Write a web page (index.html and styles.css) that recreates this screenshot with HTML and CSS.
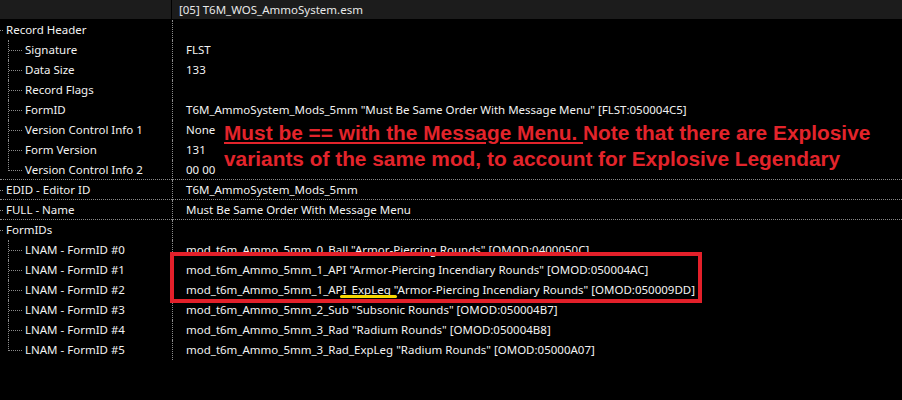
FILE: index.html
```html
<!DOCTYPE html>
<html lang="en">
<head>
    <meta charset="UTF-8">
    <title>T6M_WOS_AmmoSystem.esm</title>
    <link rel="stylesheet" href="styles.css">
</head>
<body>
    <div class="header">
        <div class="hdr-name"></div>
        <div class="hdr-file">[05] T6M_WOS_AmmoSystem.esm</div>
    </div>
    <div class="tree">
        <div class="row"><div class="name top">Record Header</div><div class="val"></div></div>
        <div class="row"><div class="name child">Signature</div><div class="val">FLST</div></div>
        <div class="row"><div class="name child">Data Size</div><div class="val">133</div></div>
        <div class="row"><div class="name child">Record Flags</div><div class="val"></div></div>
        <div class="row"><div class="name child">FormID</div><div class="val">T6M_AmmoSystem_Mods_5mm "Must Be Same Order With Message Menu" [FLST:050004C5]</div></div>
        <div class="row"><div class="name child">Version Control Info 1</div><div class="val">None</div></div>
        <div class="row"><div class="name child">Form Version</div><div class="val">131</div></div>
        <div class="row sep"><div class="name child last">Version Control Info 2</div><div class="val">00 00</div></div>
        <div class="row sep"><div class="name top">EDID - Editor ID</div><div class="val">T6M_AmmoSystem_Mods_5mm</div></div>
        <div class="row sep"><div class="name top">FULL - Name</div><div class="val">Must Be Same Order With Message Menu</div></div>
        <div class="row"><div class="name top">FormIDs</div><div class="val"></div></div>
        <div class="row"><div class="name child">LNAM - FormID #0</div><div class="val">mod_t6m_Ammo_5mm_0_Ball "Armor-Piercing Rounds" [OMOD:0400050C]</div></div>
        <div class="row"><div class="name child">LNAM - FormID #1</div><div class="val">mod_t6m_Ammo_5mm_1_API "Armor-Piercing Incendiary Rounds" [OMOD:050004AC]</div></div>
        <div class="row"><div class="name child">LNAM - FormID #2</div><div class="val">mod_t6m_Ammo_5mm_1_API<span class="mark">_ExpLeg</span> "Armor-Piercing Incendiary Rounds" [OMOD:050009DD]</div></div>
        <div class="row"><div class="name child">LNAM - FormID #3</div><div class="val">mod_t6m_Ammo_5mm_2_Sub "Subsonic Rounds" [OMOD:050004B7]</div></div>
        <div class="row"><div class="name child">LNAM - FormID #4</div><div class="val">mod_t6m_Ammo_5mm_3_Rad "Radium Rounds" [OMOD:050004B8]</div></div>
        <div class="row"><div class="name child last">LNAM - FormID #5</div><div class="val">mod_t6m_Ammo_5mm_3_Rad_ExpLeg "Radium Rounds" [OMOD:05000A07]</div></div>
    </div>

    <div class="note">
        <u>Must be == with the Message Menu. </u>Note that there are Explosive<br>
        variants of the same mod, to account for Explosive Legendary
    </div>
    <div class="redbox"></div>
</body>
</html>
```

FILE: styles.css
```css
html,body{
    margin:0;
    padding:0;
    background:#000;
    color:#f2f2f2;
    font-family:"Noto Sans",sans-serif;
    font-size:11.5px;
    position:relative;
    height:400px;
    overflow:hidden;
}
.header{
    display:grid;
    grid-template-columns:172px 1fr;
    height:19px;
    background:#1c1c1c;
    margin-bottom:1px;
}
.hdr-name{
    border-right:1px solid #000;
}
.hdr-file{
    padding-left:7px;
    line-height:19px;
    color:#e8e8e8;
}
.row{
    display:grid;
    grid-template-columns:172px 1fr;
    height:20px;
    line-height:20px;
    white-space:nowrap;
}
.row.sep{
    height:19px;
    border-bottom:1px dotted #8a8a8a;
}
.name{
    position:relative;
}
.name.top{
    padding-left:6px;
}
.name.top::before{
    content:"";
    position:absolute;
    left:0;
    top:10px;
    width:3px;
    border-top:1px dotted #8a8a8a;
}
.name.child{
    padding-left:25px;
}
.name.child::before{
    content:"";
    position:absolute;
    left:9px;
    top:10px;
    width:13px;
    border-top:1px dotted #8a8a8a;
}
.name.child::after{
    content:"";
    position:absolute;
    left:8px;
    top:0;
    height:100%;
    border-left:1px dotted #8a8a8a;
}
.name.child.last::after{
    height:11px;
}
.val{
    border-left:1px dotted #8a8a8a;
    padding-left:13px;
}
.mark{
    position:relative;
}
/* yellow marker stroke under the suffix */
.mark::after{
    content:"";
    position:absolute;
    left:-6px;
    right:-6px;
    bottom:-1px;
    height:3px;
    border-radius:2px;
    background:#f7d900;
}
.note{
    position:absolute;
    left:224px;
    top:120px;
    color:#e3242b;
    font-family:"Liberation Sans",Arial,sans-serif;
    font-weight:bold;
    font-size:20.85px;
    line-height:26px;
    white-space:nowrap;
}
.redbox{
    position:absolute;
    left:170px;
    top:252px;
    width:524px;
    height:43px;
    border:4px solid #e3202a;
}
```
